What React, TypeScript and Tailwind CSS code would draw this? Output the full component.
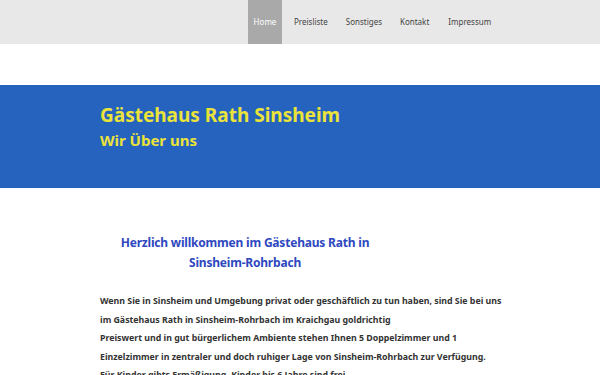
export default function App() {
  const font = { fontFamily: '"Noto Sans", "DejaVu Sans", sans-serif' };
  return (
    <div className="w-[600px] h-[375px] overflow-hidden bg-white" style={font}>
      <nav className="h-[44px] bg-[#e8e8e8] flex pl-[248px]">
        <a className="h-full w-[34px] bg-[#a9a9a9] text-white text-[8px] flex items-center justify-center">Home</a>
        <a className="h-full px-[12px] text-[#444] text-[8px] flex items-center">Preisliste</a>
        <a className="h-full px-[6px] text-[#444] text-[8px] flex items-center">Sonstiges</a>
        <a className="h-full px-[12px] text-[#444] text-[8px] flex items-center">Kontakt</a>
        <a className="h-full px-[7px] text-[#444] text-[8px] flex items-center">Impressum</a>
      </nav>
      <div className="h-[41px]" />
      <header className="h-[103px] bg-[#2563be] pl-[100px] pt-[17px]">
        <h1 className="text-[#ebe33a] text-[19px] font-bold leading-[26px]">Gästehaus Rath Sinsheim</h1>
        <h2 className="text-[#ebe33a] text-[15px] font-bold leading-[26px] -mt-[1px]">Wir Über uns</h2>
      </header>
      <main className="pt-[45px] px-[100px]">
        <h3 className="text-[#2e48c0] text-[12px] font-bold leading-[20px] text-center w-[290px] tracking-[-0.2px]">
          Herzlich willkommen im Gästehaus Rath in
          <br />
          Sinsheim-Rohrbach
        </h3>
        <div className="mt-[19px] text-[#333] text-[8.8px] font-bold leading-[18.5px] whitespace-nowrap">
          <p>Wenn Sie in Sinsheim und Umgebung privat oder geschäftlich zu tun haben, sind Sie bei uns</p>
          <p>im Gästehaus Rath in Sinsheim-Rohrbach im Kraichgau goldrichtig</p>
          <p>Preiswert und in gut bürgerlichem Ambiente stehen Ihnen 5 Doppelzimmer und 1</p>
          <p>Einzelzimmer in zentraler und doch ruhiger Lage von Sinsheim-Rohrbach zur Verfügung.</p>
          <p>Für Kinder gibts Ermäßigung, Kinder bis 6 Jahre sind frei.</p>
        </div>
      </main>
    </div>
  );
}
